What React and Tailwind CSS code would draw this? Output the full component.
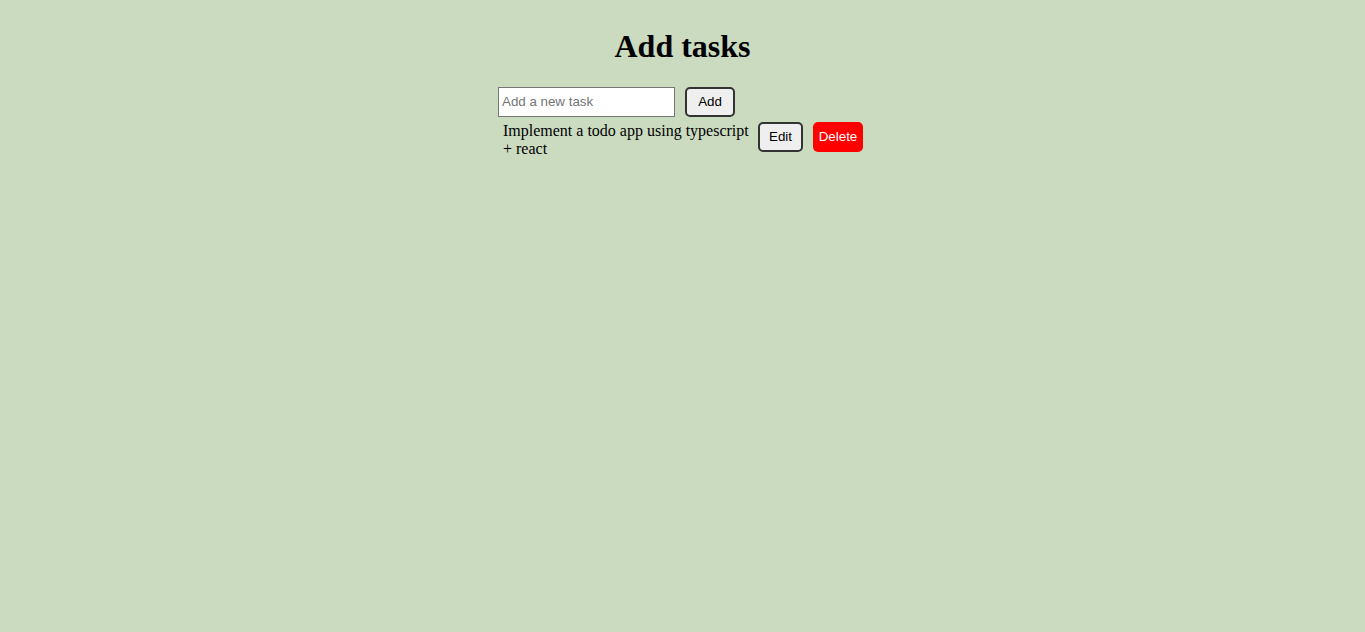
export default function App() {
  return (
    <div className="min-h-screen w-full bg-[#cadbc0] pt-[28px]">
      <h1 className="text-center font-['Liberation_Serif',serif] text-[32px] font-bold leading-[36px] text-black">
        Add tasks
      </h1>
      <div className="mx-auto mt-[23px] w-[369px]">
        <div className="flex items-center gap-[10px]">
          <input
            type="text"
            placeholder="Add a new task"
            className="h-[30px] w-[177px] border border-[#767676] bg-white px-[3px] pb-[1px] font-['Liberation_Sans',sans-serif] text-[13.333px] text-black outline-none placeholder:text-[#757575]"
          />
          <button className="h-[30px] w-[50px] rounded-[5px] border-2 border-[#333333] bg-[#efefef] font-['Liberation_Sans',sans-serif] text-[13.333px] text-black">
            Add
          </button>
        </div>
        <div className="mt-[5px] flex items-start">
          <div className="box-content w-[250px] pl-[5px] font-['Liberation_Serif',serif] text-[16px] leading-[18px] text-black">
            Implement a todo app using typescript + react
          </div>
          <button className="ml-[5px] h-[30px] w-[45px] rounded-[5px] border-2 border-[#333333] bg-[#efefef] font-['Liberation_Sans',sans-serif] text-[13.333px] text-black">
            Edit
          </button>
          <button className="ml-[10px] h-[30px] w-[50px] rounded-[5px] bg-[#ff0000] font-['Liberation_Sans',sans-serif] text-[13.333px] text-white">
            Delete
          </button>
        </div>
      </div>
    </div>
  );
}
